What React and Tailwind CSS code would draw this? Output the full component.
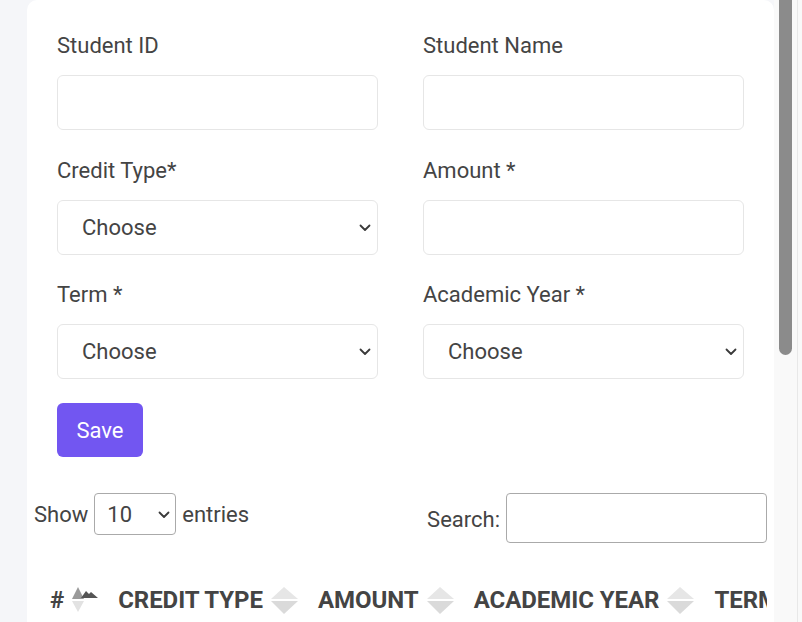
import { useState } from 'react'

function Chevron({ className }) {
  return (
    <svg className={className} width="12" height="8" viewBox="0 0 12 8" fill="none">
      <path d="M1.5 1.5 6 6l4.5-4.5" stroke="#3a3a3a" strokeWidth="1.8" strokeLinecap="round" strokeLinejoin="round" />
    </svg>
  )
}

function SortBoth() {
  return (
    <svg width="27" height="27" viewBox="0 0 27 27" className="shrink-0">
      <path d="M13 0 27 12H0Z" fill="#e6e6e6" />
      <path d="M0 14h27L13 27Z" fill="#dadada" />
    </svg>
  )
}

function SortAsc() {
  return (
    <svg width="27" height="27" viewBox="0 0 27 27" className="shrink-0">
      <path d="M0 14h12L6 25Z" fill="#e2e2e2" />
      <path d="M6 0 12 12H0Z" fill="#9a9a9a" />
      <path d="M9 11 14 4l3 3 2-2 7 6Z" fill="#555" />
    </svg>
  )
}

function Field({ label, children }) {
  return (
    <div className="flex flex-col">
      <label className="h-[30px] leading-[30px] text-[22px] text-[#444] mb-[14px]">{label}</label>
      {children}
    </div>
  )
}

function TextInput() {
  return <input className="h-[55px] w-full rounded-[6px] border border-[#e6e6e6] bg-white px-4 text-[22px] outline-none" />
}

function Select() {
  return (
    <div className="relative h-[55px]">
      <select className="h-full w-full appearance-none rounded-[6px] border border-[#e6e6e6] bg-white pl-[24px] text-[22px] text-[#444] outline-none">
        <option>Choose</option>
      </select>
      <Chevron className="pointer-events-none absolute right-[7px] top-[24px]" />
    </div>
  )
}

const columns = ['CREDIT TYPE', 'AMOUNT', 'ACADEMIC YEAR', 'TERM', 'ACTIONS']

export default function App() {
  const [entries, setEntries] = useState('10')

  return (
    <div className="flex h-[622px] w-[802px] overflow-hidden bg-[#f5f6f9]" style={{ fontFamily: 'Roboto, "Liberation Sans", sans-serif' }}>
      <div className="w-[27px] shrink-0" />

      {/* Card */}
      <div className="w-[747px] shrink-0 overflow-hidden rounded-t-[10px] bg-white px-[30px] pt-[31px]">
        <div className="grid grid-cols-2 gap-x-[45px] gap-y-[25.5px]">
          <Field label="Student ID"><TextInput /></Field>
          <Field label="Student Name"><TextInput /></Field>
          <Field label="Credit Type*"><Select /></Field>
          <Field label="Amount *"><TextInput /></Field>
          <Field label="Term *"><Select /></Field>
          <Field label="Academic Year *"><Select /></Field>
        </div>

        <button className="mt-[24px] h-[54px] w-[86px] rounded-[6px] bg-[#7256f1] text-[22px] text-white">Save</button>

        {/* Datatable */}
        <div className="-mx-[23px] mt-[36px]">
          <div className="flex items-start justify-between">
            <div className="flex items-center text-[22px] text-[#444]">
              <span>Show</span>
              <div className="relative mx-[6px]">
                <select
                  value={entries}
                  onChange={(e) => setEntries(e.target.value)}
                  className="h-[42px] w-[82px] appearance-none rounded-[4px] border border-[#aaa] bg-white pl-[12px] text-[22px] text-[#444] outline-none"
                >
                  <option>10</option>
                  <option>25</option>
                  <option>50</option>
                </select>
                <Chevron className="pointer-events-none absolute right-[6px] top-[18px]" />
              </div>
              <span>entries</span>
            </div>
            <div className="flex items-center text-[22px] text-[#444]">
              <span className="mr-[6px] mt-[2px]">Search:</span>
              <input className="h-[50px] w-[261px] rounded-[4px] border border-[#aaa] bg-white outline-none" />
            </div>
          </div>

          <div className="mt-[39px] overflow-hidden">
            <div className="flex items-center whitespace-nowrap pl-[16px] text-[24px] font-bold tracking-[-0.05px] text-[#444]">
              <span>#</span>
              <span className="ml-[8px] mr-[-1px]"><SortAsc /></span>
              {columns.map((c) => (
                <div key={c} className="ml-[20px] flex items-center">
                  <span>{c}</span>
                  <span className="ml-[8px]"><SortBoth /></span>
                </div>
              ))}
            </div>
          </div>
        </div>
      </div>

      {/* Scrollbar */}
      <div className="flex w-[28px] shrink-0 bg-[#f9f9f9]">
        <div className="ml-[5px] h-[355px] w-[13px] rounded-b-[7px] bg-[#8b8b8b]" />
        <div className="ml-[5px] w-px bg-[#e8e8e8]" />
      </div>
    </div>
  )
}
